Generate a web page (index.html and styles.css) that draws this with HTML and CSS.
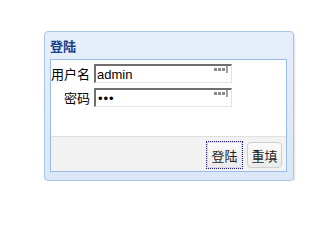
FILE: index.html
```html
<!DOCTYPE html>
<html>
<head>
<meta charset="utf-8">
<link rel="stylesheet" href="styles.css">
</head>
<body>
<div class="panel">
  <div class="panel-header">登陆</div>
  <div class="panel-body">
    <div class="form">
      <div class="row">
        <label class="lbl">用户名</label>
        <div class="field"><span class="val">admin</span><svg class="key" width="14" height="7" viewBox="0 0 14 7"><rect x="0" y="2" width="3" height="3" fill="#8a8a8a"/><rect x="4" y="2" width="3" height="3" fill="#8a8a8a"/><rect x="8" y="2" width="3" height="3" fill="#8a8a8a"/><rect x="12.5" y="0" width="1" height="7" fill="#444"/></svg></div>
      </div>
      <div class="row">
        <label class="lbl">密码</label>
        <div class="field"><span class="val pw">•••</span><svg class="key" width="14" height="7" viewBox="0 0 14 7"><rect x="0" y="2" width="3" height="3" fill="#8a8a8a"/><rect x="4" y="2" width="3" height="3" fill="#8a8a8a"/><rect x="8" y="2" width="3" height="3" fill="#8a8a8a"/><rect x="12.5" y="0" width="1" height="7" fill="#444"/></svg></div>
      </div>
    </div>
    <div class="footer">
      <button class="btn focused">登陆</button>
      <button class="btn">重填</button>
    </div>
  </div>
</div>
</body>
</html>
```

FILE: styles.css
```css
html, body {
  margin: 0;
  padding: 0;
  background: #ffffff;
  font-family: "Liberation Sans", "Noto Sans CJK SC", sans-serif;
}
.panel {
  margin: 31px 0 0 44px;
  width: 248px;
  height: 148px;
  border: 1px solid #a9c4ea;
  border-radius: 4px;
  background: linear-gradient(#e6eefa, #dbe7f7);
  box-shadow: 1px 1px 2px rgba(0,0,0,0.12);
  display: flex;
  flex-direction: column;
}
.panel-header {
  height: 27px;
  line-height: 28px;
  padding-left: 5px;
  font-size: 13px;
  font-weight: bold;
  color: #15428b;
  font-family: "Noto Sans CJK SC", sans-serif;
}
.panel-body {
  margin: 0 6px 8px 5px;
  flex: 1;
  border: 1px solid #99bbe8;
  background: #ffffff;
  display: flex;
  flex-direction: column;
}
.form {
  flex: 1;
  padding-top: 4px;
  display: flex;
  flex-direction: column;
  gap: 5px;
}
.row {
  display: flex;
  align-items: center;
  height: 19px;
}
.lbl {
  width: 39px;
  text-align: right;
  font-size: 13px;
  color: #000;
  font-family: "Noto Sans CJK SC", sans-serif;
  margin-right: 4px;
}
.field {
  position: relative;
  width: 135px;
  height: 16px;
  border-top: 2px solid #6f6f6f;
  border-left: 2px solid #6f6f6f;
  border-right: 1px solid #e2e2e2;
  border-bottom: 1px solid #e2e2e2;
  background: #fff;
  display: flex;
  align-items: center;
}
.val {
  font-size: 13px;
  padding-left: 1px;
  color: #000;
}
.pw {
  font-size: 13px;
  letter-spacing: 1px;
  padding-left: 2px;
}
.key {
  position: absolute;
  right: 3px;
  top: 0px;
}
.footer {
  height: 35px;
  border-top: 1px solid #e0e0e0;
  background: #f2f2f2;
  display: flex;
  justify-content: flex-end;
  align-items: flex-start;
  gap: 5px;
  padding: 5px 4px 0 0;
  box-sizing: border-box;
}
.btn {
  width: 35px;
  height: 26px;
  padding: 0;
  font-size: 13px;
  font-family: "Noto Sans CJK SC", sans-serif;
  color: #222;
  background: linear-gradient(#fbfbfb, #ebebeb);
  border: 1px solid #cfcfcf;
  border-radius: 4px;
}
.btn.focused {
  outline: 1px dotted #1a1a8a;
  outline-offset: 0;
  border-color: #d8d8e8;
  border-radius: 0;
}
```
